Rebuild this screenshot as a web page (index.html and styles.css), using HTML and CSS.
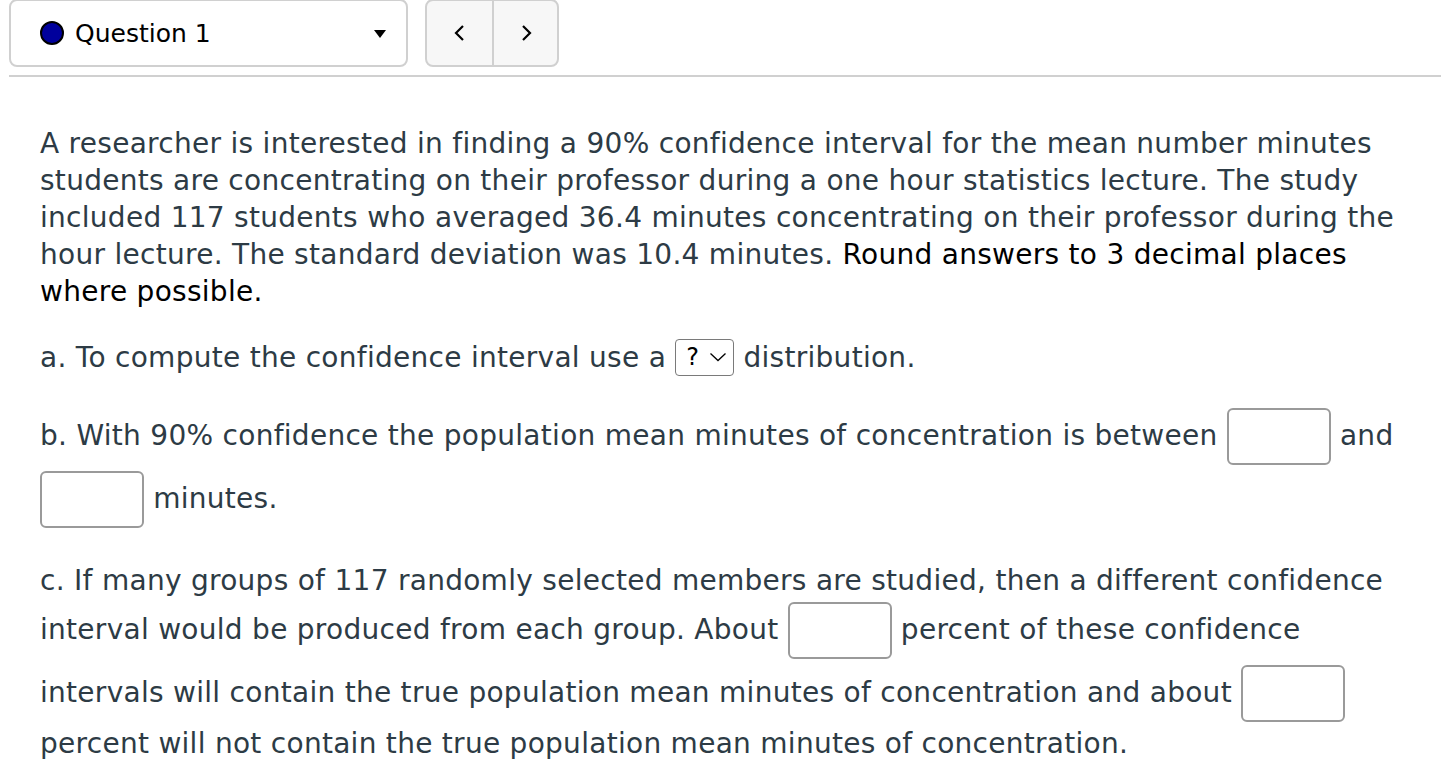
FILE: index.html
```html
<!DOCTYPE html>
<html>
<head>
<meta charset="utf-8">
<link rel="stylesheet" href="styles.css">
</head>
<body>
<header class="topbar">
  <div class="qselect">
    <span class="dot"></span>
    <span class="qlabel">Question 1</span>
    <span class="caret"></span>
  </div>
  <div class="nav">
    <button class="navbtn" aria-label="Previous">
      <svg width="14" height="18" viewBox="0 0 14 18"><path d="M10 2 L3 9 L10 16" fill="none" stroke="#000" stroke-width="2.2"/></svg>
    </button>
    <button class="navbtn" aria-label="Next">
      <svg width="14" height="18" viewBox="0 0 14 18"><path d="M4 2 L11 9 L4 16" fill="none" stroke="#000" stroke-width="2.2"/></svg>
    </button>
  </div>
</header>
<div class="rule"></div>
<main class="question">
  <p class="intro">A researcher is interested in finding a 90% confidence interval for the mean number minutes students are concentrating on their professor during a one hour statistics lecture. The study included 117 students who averaged 36.4 minutes concentrating on their professor during the hour lecture. The standard deviation was 10.4 minutes. <span class="strong">Round answers to 3 decimal places where possible.</span></p>
  <p class="part">a. To compute the confidence interval use a <span class="sel"><span class="q">?</span><svg width="18" height="10" viewBox="0 0 18 10"><path d="M1.5 1.5 L9 8.5 L16.5 1.5" fill="none" stroke="#000" stroke-width="1.3"/></svg></span> distribution.</p>
  <p class="part tall">b. With 90% confidence the population mean minutes of concentration is between <span class="box"></span> and <span class="box"></span> minutes.</p>
  <p class="part tall">c. If many groups of 117 randomly selected members are studied, then a different confidence interval would be produced from each group. About <span class="box"></span> percent of these confidence intervals will contain the true population mean minutes of concentration and about <span class="box"></span> percent will not contain the true population mean minutes of concentration.</p>
</main>
</body>
</html>
```
FILE: styles.css
```css
html, body {
  margin: 0;
  padding: 0;
  background: #fff;
}
body {
  font-family: "DejaVu Sans", Verdana, sans-serif;
  color: #2d3b45;
}
.topbar {
  display: flex;
  align-items: flex-start;
  gap: 17px;
  padding-left: 9px;
}
.qselect {
  box-sizing: border-box;
  width: 399px;
  height: 68px;
  border: 2px solid #d0d0d0;
  border-radius: 8px;
  display: flex;
  align-items: center;
  padding-left: 29px;
  padding-right: 20px;
  margin-top: -1px;
}
.dot {
  width: 20px;
  height: 20px;
  border-radius: 50%;
  background: #00009c;
  border: 2px solid #000;
  flex: none;
}
.qlabel {
  margin-left: 11px;
  font-size: 25px;
  color: #000;
  flex: 1;
}
.caret {
  width: 0;
  height: 0;
  border-left: 6.5px solid transparent;
  border-right: 6.5px solid transparent;
  border-top: 8px solid #000;
  margin-top: 2px;
}
.nav {
  display: flex;
  box-sizing: border-box;
  height: 68px;
  margin-top: -1px;
  border: 2px solid #d0d0d0;
  border-radius: 8px;
  background: #f7f7f7;
  overflow: hidden;
}
.navbtn {
  width: 65px;
  height: 100%;
  border: 0;
  background: transparent;
  padding: 0;
  display: flex;
  align-items: center;
  justify-content: center;
}
.navbtn + .navbtn {
  border-left: 2px solid #d0d0d0;
}
.rule {
  margin: 8px 0 0 9px;
  height: 2px;
  background: #d0d0d0;
}
.question {
  padding: 48px 30px 0 40px;
  font-size: 28px;
  letter-spacing: 0.28px;
  line-height: 37px;
}
.question p {
  margin: 0 0 29px;
}
.part.tall {
  margin-bottom: 31px;
}
.strong {
  color: #000;
}
.sel {
  display: inline-flex;
  align-items: center;
  gap: 10px;
  box-sizing: border-box;
  width: 59px;
  height: 37px;
  padding: 0 0 0 10px;
  border: 1.5px solid #7a7a7a;
  border-radius: 4px;
  vertical-align: middle;
  margin-top: -4px;
  color: #000;
  font-size: 24px;
  line-height: 1;
  letter-spacing: 0;
}
.box {
  display: inline-block;
  box-sizing: border-box;
  width: 104px;
  height: 57px;
  border: 2px solid #9a9a9a;
  border-radius: 6px;
  vertical-align: middle;
  margin: 3px 0;
  background: #fff;
}
```
